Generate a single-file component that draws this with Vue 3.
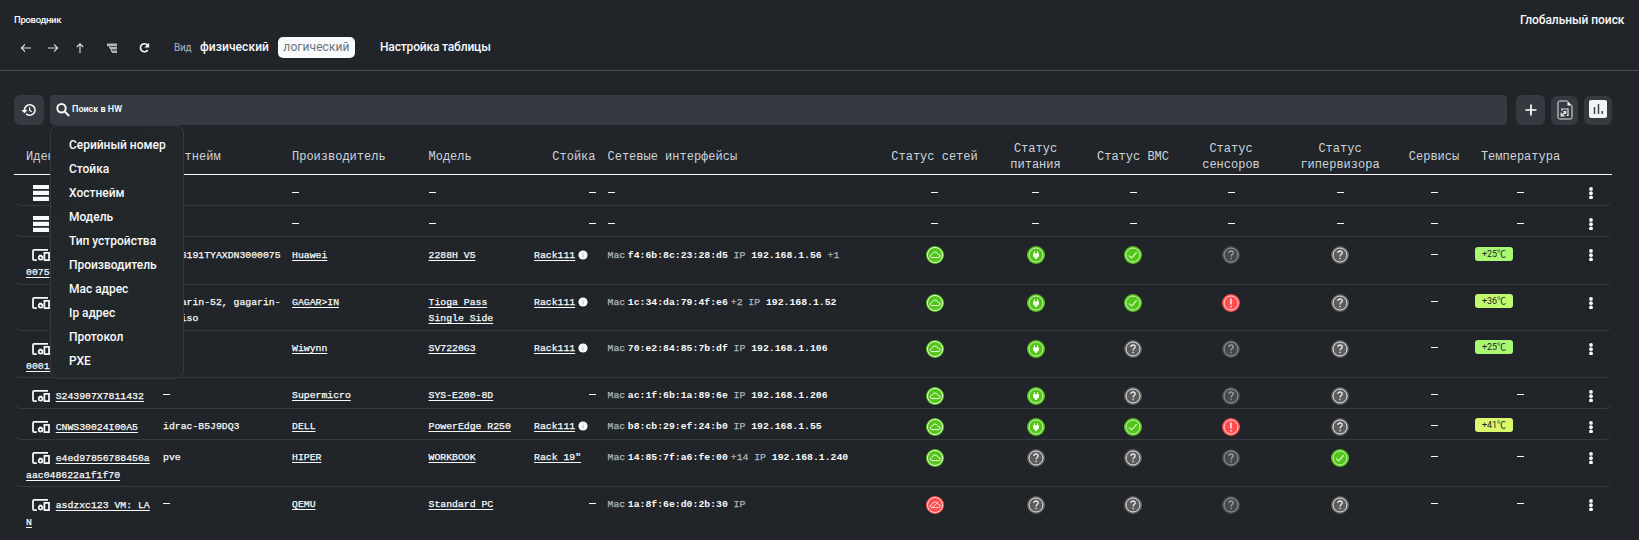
<script setup>
const columns = [
  ['Идентификатор', 'ident'], ['Хостнейм', ''], ['Производитель', ''], ['Модель', ''],
  ['Стойка', 'right'], ['Сетевые интерфейсы', 'net'], ['Статус сетей', 'mid'],
  ['Статус питания', 'mid'], ['Статус BMC', 'mid'], ['Статус сенсоров', 'mid'],
  ['Статус гипервизора', 'mid'], ['Сервисы', 'mid'], ['Температура', 'mid'], ['', '']
]
const filters = ['Серийный номер', 'Стойка', 'Хостнейм', 'Модель', 'Тип устройства', 'Производитель', 'Мас адрес', 'Ip адрес', 'Протокол', 'PXE']
const rows = [
  { h: 31, low: true, rack: true },
  { h: 31, low: true, rack: true },
  { h: 48, low: true, id: ['2106191TYAXDN300', '0075'], host: ['2106191TYAXDN3000075'], man: 'Huawei', model: ['2288H V5'], place: 'Rack111', info: true, mac: 'f4:6b:8c:23:28:d5', ip: '192.168.1.56', ipMore: '+1', st: ['cloud', 'plug', 'ok', 'dim', 'unk'], t: 25 },
  { h: 46, id: ['GAGARIN-52'], host: ['gagarin-52, gagarin-', '52-iso'], man: 'GAGAR>IN', model: ['Tioga Pass', 'Single Side'], place: 'Rack111', info: true, mac: '1c:34:da:79:4f:e6', macMore: '+2', ip: '192.168.1.52', st: ['cloud', 'plug', 'ok', 'err', 'unk'], t: 36 },
  { h: 47, id: ['SV7220G3-0000000', '00012'], host: [], man: 'Wiwynn', model: ['SV7220G3'], place: 'Rack111', info: true, mac: '70:e2:84:85:7b:df', ip: '192.168.1.106', st: ['cloud', 'plug', 'unk', 'dim', 'unk'], t: 25 },
  { h: 31, id: ['S243907X7811432'], host: ['—'], man: 'Supermicro', model: ['SYS-E200-8D'], mac: 'ac:1f:6b:1a:89:6e', ip: '192.168.1.206', st: ['cloud', 'plug', 'unk', 'dim', 'unk'] },
  { h: 31, id: ['CNWS30024I00A5'], host: ['idrac-B5J9DQ3'], man: 'DELL', model: ['PowerEdge R250'], place: 'Rack111', info: true, mac: 'b8:cb:29:ef:24:b0', ip: '192.168.1.55', st: ['cloud', 'plug', 'ok', 'err', 'unk'], t: 41 },
  { h: 47, id: ['e4ed97856788456a', 'aac048622a1f1f70'], host: ['pve'], man: 'HIPER', model: ['WORKBOOK'], place: 'Rack 19"', mac: '14:85:7f:a6:fe:00', macMore: '+14', ip: '192.168.1.240', st: ['cloud', 'unk', 'unk', 'dim', 'ok'] },
  { h: 53, id: ['asdzxc123 VM: LA', 'N'], host: ['—'], man: 'QEMU', model: ['Standard PC'], mac: '1a:8f:6e:d0:2b:30', ip: ' ', st: ['cloudErr', 'unk', 'unk', 'dim', 'unk'] }
]
const tempClass = t => (t > 40 ? 't-hot' : t > 30 ? 't-warm' : 't-ok')
const statusClass = s => ({ cloud: 'good net-ok', plug: 'good', ok: 'good', err: 'bad', cloudErr: 'bad net-ok', unk: 'gray', dim: 'gray dim' })[s]
</script>

<template>
  <div class="page">
    <header class="top">
      <div class="title-line">
        <span class="title">Проводник</span>
        <span class="global">Глобальный поиск</span>
      </div>
      <nav class="nav">
        <svg class="ni" viewBox="0 0 12 12"><path d="M11 6H1.600M5 2.400 1.400 6 5 9.600" /></svg>
        <svg class="ni" viewBox="0 0 12 12"><path d="M1 6h9.400M7 2.400 10.600 6 7 9.600" /></svg>
        <svg class="ni" viewBox="0 0 12 12"><path d="M6 11V1.800M2.800 5 6 1.700 9.200 5" /></svg>
        <svg class="ni tree" viewBox="0 0 12 12"><path d="M1 1.500h10v2.800H1zM4 5.100h7v2.400H4zM6 8.400h5v2.500H6zM3.200 4h1v2.500h-1zM5 7h1v3H5z" /></svg>
        <svg class="ni reload" viewBox="0 0 12 12"><path d="M9.500 3.200A4 4 0 1 0 9.700 8" /><path class="fill" d="M6.300 5.400h4.800V.8z" /></svg>
        <span class="kind">Вид</span>
        <span class="mode phys">физический</span>
        <span class="mode pill">логический</span>
        <span class="mode setup">Настройка таблицы</span>
      </nav>
    </header>

    <section class="tools">
      <button class="btn hist">
        <svg viewBox="0 0 24 24" width="16" height="16"><path fill="currentColor" d="M13 3a9 9 0 0 0-9 9H0.500l4.700 4.700L10 12H6.500a6.700 6.700 0 1 1 2 4.800l-1.600 1.700A9 9 0 1 0 13 3zm-1 5v5l4.200 2.500.9-1.400-3.300-2V8z" /></svg>
      </button>
      <div class="search">
        <svg viewBox="0 0 14 14" width="14" height="14"><circle cx="5.500" cy="5.300" r="4.200" /><path d="m8.600 8.400 4.500 4.600" /></svg>
        <span>Поиск в HW</span>
      </div>
      <button class="btn add"><svg viewBox="0 0 12 12" width="12" height="12"><path d="M6 .5v11M.5 6h11" stroke="#fff" stroke-width="1.700" /></svg></button>
      <button class="btn doc">
        <svg viewBox="0 0 16 20" width="16" height="20" fill="none" stroke="#e4e6e8"><path d="M10.500 1H2.500A1.500 1.500 0 0 0 1 2.500v15A1.500 1.500 0 0 0 2.500 19h11a1.500 1.500 0 0 0 1.500-1.500V5.500" /><path d="M10.500 1 15 5.500h-4.500z" fill="#fff" stroke="none" /><path d="M4.800 10.700V9h6.200v6.500H9.500M4.200 12.500v3.300h3.500M4.800 15.300 8.500 11.700M6.300 11.500h2.400v2.500" stroke-width="1.200" /></svg>
      </button>
      <button class="btn chart">
        <svg viewBox="0 0 18 18" width="18" height="18"><rect width="18" height="18" rx="2" fill="#f1f3f4" /><path d="M5.500 7v7M9.500 4v10M13.200 11v3" stroke="#343a40" stroke-width="1.400" /></svg>
      </button>
      <ul class="menu">
        <li v-for="f in filters" :key="f">{{ f }}</li>
      </ul>
    </section>

    <main class="table">
      <div class="row head">
        <span v-for="(c, i) in columns" :key="i" :class="c[1]">{{ c[0] }}</span>
      </div>
      <div v-for="(r, i) in rows" :key="i" class="row body" :class="{ low: r.low }" :style="{ height: r.h + 'px' }">
        <template v-if="r.rack">
          <div class="rack"><svg class="bars" viewBox="0 0 16 16"><path d="M0 0h16v4H0zM0 5.700h16v4.300H0zM0 11.700h16V16H0z" /></svg></div>
          <div></div>
          <div class="cell"><i class="dash"></i></div>
          <div class="cell"><i class="dash"></i></div>
          <div class="cell right"><i class="dash"></i></div>
          <div class="cell net"><i class="dash"></i></div>
          <div v-for="n in 7" :key="n" class="cell mid"><i class="dash"></i></div>
        </template>
        <template v-else>
          <div class="ident">
            <svg class="dev" viewBox="0 0 18 12"><path d="M16 .9H2.200Q1 .9 1 2v8q0 1.100 1.200 1.100h2.600M12.400 3.900h4.600v7.200h-4.600z" /><circle cx="8.600" cy="8.700" r="1.900" /><path d="M7.100 6.300h2.800" stroke-width="1.200" /></svg><u>{{ r.id[0] }}</u>
            <template v-if="r.id[1]"><br /><u>{{ r.id[1] }}</u></template>
          </div>
          <div class="cell"><i v-if="r.host[0] === '—'" class="dash"></i><template v-else><span v-for="h in r.host" :key="h" class="line">{{ h }}</span></template></div>
          <div class="cell"><u>{{ r.man }}</u></div>
          <div class="cell"><span v-for="m in r.model" :key="m" class="line"><u>{{ m }}</u></span></div>
          <div v-if="r.place" class="cell"><u>{{ r.place }}</u><svg v-if="r.info" viewBox="0 0 10 10" class="info"><circle cx="5" cy="5" r="4.600" /><path d="M5 2.500v1M5 4.300v3.200" /></svg></div>
          <div v-else class="cell right"><i class="dash"></i></div>
          <div class="cell net"><em>Mac</em><b>{{ r.mac }}</b><em v-if="r.macMore" class="more">{{ r.macMore }}</em><em class="ip">IP</em><b class="addr">{{ r.ip }}</b><em v-if="r.ipMore" class="ip">{{ r.ipMore }}</em></div>
          <div v-for="(s, k) in r.st" :key="k" class="mid status">
            <svg viewBox="0 0 18 18" :class="statusClass(s)">
              <circle class="disc" cx="9" cy="9" r="9" />
              <circle class="ring" cx="9" cy="9" :r="s.startsWith('cloud') ? 7.5 : 7" />
              <path v-if="s.startsWith('cloud')" d="M5.600 11.600h6.800a1.500 1.500 0 0 0 .3-3.100q-.8-.2-1-.5A2.800 2.800 0 0 0 6.300 8q-.2.300-.9.500a1.600 1.600 0 0 0 .2 3.100z" />
              <path v-if="s === 'cloudErr'" d="m5.500 12 7-6" />
              <path v-if="s === 'plug'" class="solid" d="M7 5.200h1v2h2v-2h1v2h1v2.300c0 1.200-.8 2-2 2.300V13H8v-1.200c-1.200-.3-2-1.100-2-2.300V7.200h1z" />
              <path v-if="s === 'ok'" d="m5 9.400 2.700 2.500 5-5.700" class="thick" />
              <path v-if="s === 'err'" class="excl" d="M9 4.500v6M9 11.900v1.600" />
              <path v-if="s === 'unk' || s === 'dim'" class="thick" d="M6.900 7.100q0-2.100 2.200-2.100 2.100 0 2.100 1.900c0 1.300-2.100 1.500-2.100 3.500M9.100 11.700v1.500" />
            </svg>
          </div>
          <div class="cell mid"><i class="dash"></i></div>
          <div v-if="r.t" class="temp"><span :class="tempClass(r.t)">+{{ r.t }}℃</span></div>
          <div v-else class="cell mid"><i class="dash"></i></div>
        </template>
        <div class="dots"><svg viewBox="0 0 4 12"><circle cx="2" cy="1.900" r="1.900" /><circle cx="2" cy="6.200" r="1.900" /><circle cx="2" cy="10.500" r="1.900" /></svg></div>
      </div>
    </main>
  </div>
</template>

<style>
body { background: #212529; }
</style>

<style scoped>
.page { width: 1639px; height: 540px; overflow: hidden; background: #212529; color: #f8f9fa; font-family: Roboto, "Noto Sans", sans-serif; }
.top { height: 70px; border-bottom: 1px solid #495057; padding: 0 14px; }
.title-line { display: flex; justify-content: space-between; padding-top: 12px; height: 16px; line-height: 16px; }
.title { font-size: 9.500px; font-weight: 500; letter-spacing: -.3px; }
.global { width: 105px; font-size: 12px; font-weight: 500; white-space: nowrap; letter-spacing: -.06px; }
.nav { display: flex; align-items: center; height: 21px; margin-top: 9px; padding-left: 6px; }
.ni { width: 12px; height: 12px; margin-right: 15px; fill: none; stroke: #dee2e6; stroke-width: 1.100; flex: none; }
.ni.tree { margin: 0 19px 0 5px; fill: #adb5bd; stroke: none; }
.ni.reload { margin: 0 24px 0 1px; stroke: #f8f9fa; stroke-width: 1.600; }
.fill { fill: #f8f9fa; stroke: none; }
.kind { width: 26px; font-size: 10px; color: #adb5bd; letter-spacing: -.2px; }
.mode { height: 21px; line-height: 20px; font-size: 12px; font-weight: 500; white-space: nowrap; }
.phys { width: 78px; letter-spacing: .08px; }
.pill { width: 77px; text-align: center; background: #f8f9fa; color: #6c757d; border-radius: 5px; font-weight: 400; margin-right: 25px; letter-spacing: .1px; }
.setup { letter-spacing: -.16px; }

.tools { position: relative; display: flex; align-items: flex-end; height: 30px; padding: 24px 27px 0 14px; }
.btn { display: flex; align-items: center; justify-content: center; border: 0; padding: 0; border-radius: 6px; background: #343a40; color: #f8f9fa; flex: none; }
.hist { width: 30px; height: 30px; margin-right: 6px; padding-right: 1px; }
.search { flex: 1; height: 30px; display: flex; align-items: center; background: #343a40; border-radius: 4px; padding-left: 6px; box-sizing: border-box; font-size: 9px; font-weight: 600; }
.search svg { fill: none; stroke: #f8f9fa; stroke-width: 2; margin-right: 2px; }
.search span { margin-top: -2px; }
.add { width: 29px; height: 30px; margin-left: 9px; }
.doc { width: 27px; height: 29px; margin-left: 6px; padding-bottom: 1px; }
.chart { width: 28px; height: 29px; margin-left: 6px; padding-bottom: 3px; }
.menu { position: absolute; z-index: 2; left: 50px; top: 54px; width: 134px; height: 254px; box-sizing: border-box; margin: 0; padding: 6.500px 0 0 18px; list-style: none; border: 1px solid #343a40; border-radius: 8px; background: linear-gradient(135deg, #212529, #23292b); }
.menu li { height: 24px; line-height: 24px; font-size: 12px; font-weight: 500; letter-spacing: -.02px; white-space: nowrap; }

.table { margin: 12px 0 0 14px; width: 1598px; font-family: "Liberation Mono", monospace; }
.row { display: grid; grid-template-columns: 149px 129px 136.500px 105.500px 61.500px 288.500px 101px 101px 94px 102px 116px 72px 101px 41px; box-sizing: border-box; }
.head { height: 38px; align-items: center; border-bottom: 1px solid #f8f9fa; padding-top: 2px; font-size: 12px; line-height: 16px; color: #ced4da; }
.ident { padding-left: 12px; }
.right { text-align: right; }
.net { padding-left: 12px; }
.mid { text-align: center; }
.head .mid { padding: 0 6px; }
.body { border-bottom: 1px solid #343a40; border-radius: 7px; font-size: 9.800px; line-height: 16px; padding-top: 9px; color: #f8f9fa; white-space: nowrap; -webkit-text-stroke: .25px currentColor; }
.body:last-child { border-color: transparent; }
.body .cell, .body .ident { padding-top: 1px; }
.body.low .cell { padding-top: 2px; }
.body .ident { line-height: 17px; }
u { text-decoration: underline; text-underline-offset: 2px; text-decoration-thickness: 1px; }
.line { display: block; }
.dash { display: inline-block; width: 7px; height: 1px; background: #f8f9fa; vertical-align: 3px; }
.rack { padding-left: 12px; }
.bars { display: block; width: 16px; height: 16px; margin: 1px 0 0 7px; fill: #f8f9fa; }
.dev { width: 18px; height: 12px; margin: 0 5.700px 0 6px; vertical-align: -3px; fill: none; stroke: #f8f9fa; stroke-width: 1.750; }
.info { width: 10px; height: 10px; margin-left: 3px; vertical-align: -2px; fill: #f8f9fa; stroke: #adb5bd; stroke-width: 1; }
.info circle { stroke: none; }
.net em { font-style: normal; color: #adb5bd; margin-right: 2.700px; }
.net b { font-weight: 700; -webkit-text-stroke: 0; }
.net em.more { margin: 0 0 0 3px; }
.net em.ip { margin: 0 0 0 5.800px; }
.net b.addr { margin-left: 5.800px; }
.status svg { display: block; width: 18px; height: 18px; margin: 0 auto; fill: none; stroke: #d0f2b8; stroke-width: 1; }
.status .net-ok { stroke: #f0fde4; stroke-width: 1; }
.disc { stroke: none; fill: #52c41a; }
.status .bad { stroke: #ffd8d6; }
.bad .disc { fill: #ff4d4f; }
.status .gray { stroke: #e8e8e8; }
.gray .disc { fill: #5c5c5c; }
.dim { opacity: .62; }
.solid { fill: #f4ffe9; stroke: none; }
.thick { stroke-width: 1.300; }
.excl { stroke-width: 1.700; }
.temp { padding-left: 5px; }
.temp span { display: block; width: 38px; height: 14px; border-radius: 3px; text-align: center; font: 9px/15px Roboto, "Noto Sans CJK SC", sans-serif; color: #212529; -webkit-text-stroke: 0; }
.low .temp { padding-top: 1px; }
.t-ok { background: #a9f871; }
.t-warm { background: #c1f96f; }
.t-hot { background: #d9f96d; }
.dots svg { display: block; width: 4px; height: 12px; margin: 3px 0 0 18px; fill: #f8f9fa; }
</style>
